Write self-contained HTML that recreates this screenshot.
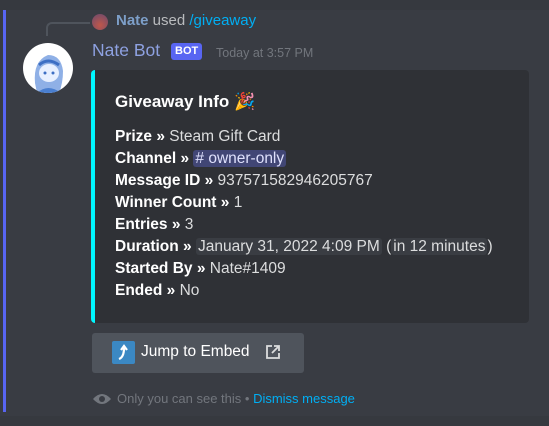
<!DOCTYPE html>
<html><head><style>
body{margin:0;width:549px;height:426px;background:#36393f;font-family:"Liberation Sans",sans-serif;position:relative;overflow:hidden;}
.hl{position:absolute;left:0;top:10px;width:549px;height:406px;background:#393c43;}
.bar{position:absolute;left:3px;top:10px;width:3px;height:402px;background:#5865f2;}
.abs{position:absolute;white-space:nowrap;}
.embed{position:absolute;left:91px;top:70px;width:438px;height:253px;background:#2f3136;border-radius:4px;border-left:4px solid #00f7ff;box-sizing:border-box;}
.row{position:absolute;left:20px;font-size:15.5px;color:#dcddde;}
.row b{color:#fff;}
.pill{background:#3a3d43;border-radius:3px;padding:0 2px;}
</style></head><body>
<div class="hl"></div>
<div class="bar"></div>
<div class="abs" style="left:46px;top:22px;width:42px;height:12px;border-left:2px solid #4f545c;border-top:2px solid #4f545c;border-top-left-radius:6px;"></div>
<div class="abs" style="left:92px;top:14px;width:16px;height:16px;border-radius:50%;background:radial-gradient(circle at 50% 70%,#c0574a,#6b4a6e);"></div>
<div class="abs" style="left:116px;top:12px;font-size:15px;color:#b9bbbe;"><span style="color:#7d9fc9;font-weight:bold">Nate</span> used <span style="color:#00aff4">/giveaway</span></div>
<div class="abs" style="left:23px;top:43px;width:50px;height:50px;border-radius:50%;background:#fff;overflow:hidden;">
<svg width="50" height="50" viewBox="0 0 50 50"><path d="M12 40 Q10 18 25 12 Q38 12 40 28 Q40 40 36 50 L14 50Z" fill="#8fb0e6"/><ellipse cx="26" cy="30" rx="10" ry="9" fill="#e8f0ff"/><path d="M16 22 Q25 14 36 22" stroke="#3d6fc4" stroke-width="3" fill="none"/><circle cx="22" cy="30" r="1.5" fill="#3d6fc4"/><circle cx="30" cy="30" r="1.5" fill="#3d6fc4"/><path d="M14 50 Q25 40 38 50" fill="#4a7fd0"/></svg></div>
<div class="abs" style="left:92px;top:40px;font-size:17.5px;color:#8ea1e1;">Nate Bot</div>
<div class="abs" style="left:171px;top:43px;background:#5865f2;color:#fff;font-size:11px;font-weight:bold;padding:2px 4px;border-radius:3px;line-height:13px;">BOT</div>
<div class="abs" style="left:216px;top:46px;font-size:12.5px;color:#72767d;">Today at 3:57 PM</div>
<div class="embed">
<div class="row" style="top:22px;font-size:17px;color:#fff;font-weight:bold;">Giveaway Info 🎉</div>
<div class="row" style="top:58px"><b>Prize »</b> Steam Gift Card</div>
<div class="row" style="top:80px"><b>Channel »</b> <span style="background:#414675;color:#dee0fc;border-radius:3px;padding:0 2px"># owner-only</span></div>
<div class="row" style="top:102px"><b>Message ID »</b> 937571582946205767</div>
<div class="row" style="top:124px"><b>Winner Count »</b> 1</div>
<div class="row" style="top:146px"><b>Entries »</b> 3</div>
<div class="row" style="top:168px"><b>Duration »</b> <span class="pill">January 31, 2022 4:09 PM</span> (<span class="pill">in 12 minutes</span>)</div>
<div class="row" style="top:190px"><b>Started By »</b> Nate#1409</div>
<div class="row" style="top:212px"><b>Ended »</b> No</div>
</div>
<div class="abs" style="left:92px;top:333px;width:212px;height:40px;background:#4f545c;border-radius:3px;"></div>
<svg class="abs" style="left:112px;top:341px" width="23" height="23" viewBox="0 0 23 23"><rect width="23" height="23" rx="2" fill="#3b88c3"/><path d="M7 18Q12 16 12 7M9 9L12 5L15 9" stroke="#fff" stroke-width="2.2" fill="none"/></svg>
<div class="abs" style="left:141px;top:343px;font-size:15.5px;color:#fff;">Jump to Embed</div>
<svg class="abs" style="left:265px;top:344px" width="16" height="16" viewBox="0 0 16 16"><path d="M7 2H2v12h12V9M9 2h5v5M14 2L7 9" stroke="#dcddde" stroke-width="1.8" fill="none"/></svg>
<svg class="abs" style="left:92px;top:392px" width="20" height="14" viewBox="0 0 20 14"><path d="M1 7Q10 -3 19 7Q10 17 1 7Z" fill="#72767d"/><circle cx="10" cy="7" r="3" fill="#393c43"/></svg>
<div class="abs" style="left:117px;top:391px;font-size:13px;color:#72767d;">Only you can see this • <span style="color:#00aff4">Dismiss message</span></div>
</body></html>
